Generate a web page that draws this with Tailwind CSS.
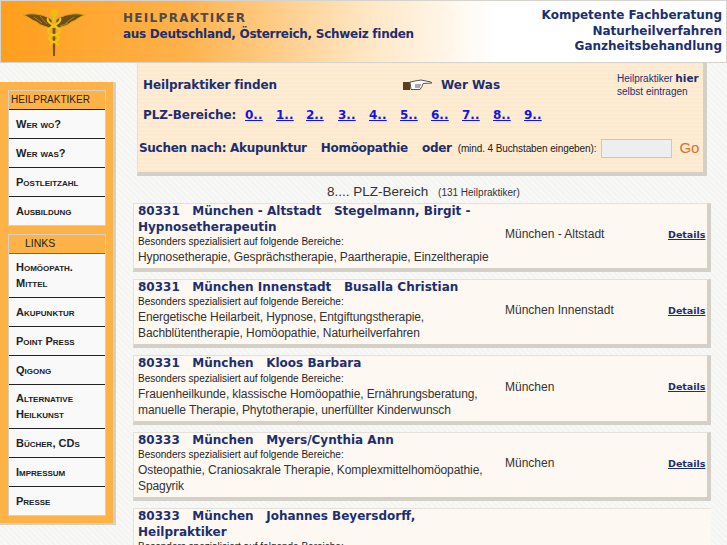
<!DOCTYPE html>
<html lang="de"><head><meta charset="utf-8"><script src="https://cdn.jsdelivr.net/npm/@tailwindcss/browser@4"></script></head>
<body class="w-[727px] h-[545px] overflow-hidden bg-[#f7f7f6] bg-[repeating-linear-gradient(45deg,#f8f8f7_0px,#f8f8f7_2px,#f4f4f3_2px,#f4f4f3_4px)] font-['Liberation_Sans',sans-serif] text-[#222]">
<header class="h-[63px] flex border border-[#d6d3cc] bg-[linear-gradient(90deg,#ff9f1c_0%,#ffb14a_25%,#ffe6c2_50%,#ffffff_68%)]">
  <div class="w-[122px] shrink-0 pl-[21px] pt-[7px]">
    <svg width="64" height="49" viewBox="0 0 64 49" class="block">
      <path d="M30 12C24 7 11 4 1 7c4 1 6 3 8 4 2 2 5 2 7 4 3 3 8 3 11 5 2 1 3-1 3-3z" fill="#6f4d18" stroke="#d8a814"/>
      <path d="M34 12C40 7 53 4 63 7c-4 1-6 3-8 4-2 2-5 2-7 4-3 3-8 3-11 5-2 1-3-1-3-3z" fill="#6f4d18" stroke="#d8a814"/>
      <path d="M12 9l8 6M18 8l7 8M46 15l-8 3M52 9l-8 6" stroke="#a8801e"/>
      <circle cx="32" cy="4.500" r="3.500" fill="#e8c010"/>
      <path d="M32 7 L32 14" stroke="#e8c010" stroke-width="3"/>
      <path d="M30.500 20h3l-.5 28h-2z" fill="#7a5414"/>
      <path d="M26 10c-3 6 12 8 12 13s-11 3-11 7 10 4 9 8M38 10c3 6-12 8-12 13s11 3 11 7-10 4-9 8" fill="none" stroke="#efc80f" stroke-width="2"/>
    </svg>
  </div>
  <div class="pt-[10px]">
    <div class="font-['DejaVu_Sans',sans-serif] font-bold text-[12px] leading-[15px] tracking-[1.3px] text-[#4c4c4c]">HEILPRAKTIKER</div>
    <div class="mt-[1px] font-['DejaVu_Sans',sans-serif] font-bold text-[12px] leading-[15px] tracking-[-0.28px] text-[#1d2f6f] whitespace-nowrap">aus Deutschland, Österreich, Schweiz finden</div>
  </div>
  <div class="ml-auto pr-[4px] pt-[7px] text-right font-['DejaVu_Sans',sans-serif] font-bold text-[12px] leading-[15.500px] text-[#1d2f6f]">
    <div>Kompetente Fachberatung</div><div>Naturheilverfahren</div><div>Ganzheitsbehandlung</div>
  </div>
</header>
<div class="flex items-start">
  <aside class="mt-[19px] w-[116px] shrink-0 bg-[#ffb347] border-r-[3px] border-b-[2px] border-[#d4d0c8] pl-[8px] pr-[7px] pt-[8px] pb-[7px]">
    <nav class="bg-[#f9f9f9] border border-[#d4d0c8] text-[11px] font-bold [font-variant:small-caps] text-[#222]">
      <div class="h-[18px] bg-[#ffb347] pl-[2px] text-[10px] leading-[18px] font-normal [font-variant:normal] border-b border-[#222] box-content">HEILPRAKTIKER</div>
      <a class="block h-[28px] pl-[7px] leading-[28px] border-b border-[#222] box-content">Wer wo?</a>
      <a class="block h-[28px] pl-[7px] leading-[28px] border-b border-[#222] box-content">Wer was?</a>
      <a class="block h-[28px] pl-[7px] leading-[28px] border-b border-[#222] box-content">Postleitzahl</a>
      <a class="block h-[28px] pl-[7px] leading-[28px]">Ausbildung</a>
    </nav>
    <nav class="mt-[8px] bg-[#f9f9f9] border border-[#d4d0c8] text-[11px] font-bold [font-variant:small-caps] text-[#222]">
      <div class="h-[18px] bg-[#ffb347] pl-[16px] text-[10.500px] leading-[17px] font-normal [font-variant:normal] border-b border-[#7a6a50] box-content">LINKS</div>
      <a class="block h-[38px] pl-[7px] pt-[5px] leading-[16px] border-b border-[#222] box-content">Homöopath.<br>Mittel</a>
      <a class="block h-[28px] pl-[7px] leading-[28px] border-b border-[#222] box-content">Akupunktur</a>
      <a class="block h-[28px] pl-[7px] leading-[28px] border-b border-[#222] box-content">Point Press</a>
      <a class="block h-[28px] pl-[7px] leading-[28px] border-b border-[#222] box-content">Qigong</a>
      <a class="block h-[38px] pl-[7px] pt-[5px] leading-[16px] border-b border-[#222] box-content">Alternative<br>Heilkunst</a>
      <a class="block h-[28px] pl-[7px] leading-[28px] border-b border-[#222] box-content">Bücher, CDs</a>
      <a class="block h-[28px] pl-[7px] leading-[28px] border-b border-[#222] box-content">Impressum</a>
      <a class="block h-[28px] pl-[7px] leading-[28px]">Presse</a>
    </nav>
  </aside>
  <main class="ml-[17px] w-[578px] shrink-0">
    <section class="ml-[4px] w-[570px] h-[113px] border-l border-[#e5e1d8] border-r-[4px] border-b-[4px] border-r-[#d4d0c8] border-b-[#d4d0c8] bg-[repeating-linear-gradient(0deg,#fde9cd_0px,#fde9cd_2px,#feecd4_2px,#feecd4_4px)] font-['DejaVu_Sans',sans-serif] font-bold text-[12px] text-[#1d2f6f]">
      <div class="flex items-center h-[42px] pt-[1px] pl-[5px] pr-[5px]">
        <span class="w-[260px] tracking-[-0.1px] shrink-0">Heilpraktiker finden</span>
        <svg width="29" height="12" viewBox="0 0 29 12" class="mr-[9px] shrink-0">
          <path d="M0 3h7v8H0z" fill="#5b3d1c"/>
          <path d="M7 3l5-1 6-1 10 2 1 1-9 .5-1 3-2 3H8z" fill="#fff" stroke="#555" stroke-width="1"/>
          <path d="M12 6h6M12 8h5" stroke="#555"/>
        </svg>
        <span>Wer Was</span>
        <div class="ml-auto w-[81px] font-['Liberation_Sans',sans-serif] font-normal text-[10px] leading-[13px] pt-[1px] shrink-0">
          <div class="whitespace-nowrap">Heilpraktiker <b class="font-['DejaVu_Sans',sans-serif] text-[10.500px]">hier</b></div><div>selbst eintragen</div>
        </div>
      </div>
      <div class="flex items-center h-[20px] pl-[5px]">
        <span class="w-[102px] shrink-0 tracking-[-0.05px]">PLZ-Bereiche:</span>
        <div class="flex text-[#1515e0] underline">
          <a class="w-[31px]">0..</a><a class="w-[30px]">1..</a><a class="w-[32px]">2..</a><a class="w-[31px]">3..</a><a class="w-[31px]">4..</a><a class="w-[31px]">5..</a><a class="w-[31px]">6..</a><a class="w-[31px]">7..</a><a class="w-[31px]">8..</a><a>9..</a>
        </div>
      </div>
      <div class="flex items-center h-[24px] mt-[11px] pl-[1px] tracking-[-0.3px]">
        <span class="whitespace-pre">Suchen nach: Akupunktur</span>
        <span class="ml-[14px]">Homöopathie</span>
        <span class="ml-[14px]">oder</span>
        <span class="ml-[6px] font-['Liberation_Sans',sans-serif] font-normal text-[10px] tracking-[-0.1px] text-[#222] whitespace-nowrap">(mind. 4 Buchstaben eingeben):</span>
        <span class="ml-[5px] w-[71px] h-[19px] shrink-0 bg-[#eeeeee] border border-[#c8c8c8]"></span>
        <span class="ml-[7px] font-['Liberation_Sans',sans-serif] font-normal text-[15px] tracking-normal text-[#d9712f]">Go</span>
      </div>
    </section>
    <h2 class="mt-[6px] h-[21px] pl-[194px] text-[13.500px] leading-[20px] font-normal text-[#333]">8.... PLZ-Bereich <span class="ml-[6px] text-[10px]">(131 Heilpraktiker)</span></h2>
    <div class="flex flex-col gap-[7px] text-[#333]">
      <article class="h-[68.500px] flex border-t border-l border-[#e5e1d8] border-r-[4px] border-b-[4px] border-r-[#d4d0c8] border-b-[#d4d0c8] bg-[#fdf8f1] pl-[4px]">
        <div class="w-[360px] mr-[7px] shrink-0">
          <div class="font-['DejaVu_Sans',sans-serif] font-bold text-[12px] leading-[15.500px] text-[#1d2f6f] whitespace-pre-wrap">80331   München - Altstadt   Stegelmann, Birgit - Hypnosetherapeutin</div>
          <div class="text-[10px] leading-[13px] text-[#222]">Besonders spezialisiert auf folgende Bereiche:</div>
          <div class="mt-[1px] text-[12px] leading-[16px] tracking-[-0.1px]">Hypnosetherapie, Gesprächstherapie, Paartherapie, Einzeltherapie</div>
        </div>
        <div class="w-[163px] shrink-0 self-center text-[12px] pb-[3px]">München - Altstadt</div>
        <a class="self-center font-['DejaVu_Sans',sans-serif] font-bold text-[9.500px] underline text-[#1d2f6f] pb-[2px]">Details</a>
      </article>
      <article class="h-[69.500px] flex border-t border-l border-[#e5e1d8] border-r-[4px] border-b-[4px] border-r-[#d4d0c8] border-b-[#d4d0c8] bg-[#fdf8f1] pl-[4px]">
        <div class="w-[360px] mr-[7px] shrink-0">
          <div class="font-['DejaVu_Sans',sans-serif] font-bold text-[12px] leading-[15.500px] text-[#1d2f6f] whitespace-pre-wrap">80331   München Innenstadt   Busalla Christian</div>
          <div class="text-[10px] leading-[13px] text-[#222]">Besonders spezialisiert auf folgende Bereiche:</div>
          <div class="mt-[1px] text-[12px] leading-[16px] tracking-[-0.1px]">Energetische Heilarbeit, Hypnose, Entgiftungstherapie, Bachblütentherapie, Homöopathie, Naturheilverfahren</div>
        </div>
        <div class="w-[163px] shrink-0 self-center text-[12px] pb-[3px]">München Innenstadt</div>
        <a class="self-center font-['DejaVu_Sans',sans-serif] font-bold text-[9.500px] underline text-[#1d2f6f] pb-[2px]">Details</a>
      </article>
      <article class="h-[69.500px] flex border-t border-l border-[#e5e1d8] border-r-[4px] border-b-[4px] border-r-[#d4d0c8] border-b-[#d4d0c8] bg-[#fdf8f1] pl-[4px]">
        <div class="w-[360px] mr-[7px] shrink-0">
          <div class="font-['DejaVu_Sans',sans-serif] font-bold text-[12px] leading-[15.500px] text-[#1d2f6f] whitespace-pre-wrap">80331   München   Kloos Barbara</div>
          <div class="text-[10px] leading-[13px] text-[#222]">Besonders spezialisiert auf folgende Bereiche:</div>
          <div class="mt-[1px] text-[12px] leading-[16px] tracking-[-0.1px]">Frauenheilkunde, klassische Homöopathie, Ernährungsberatung, manuelle Therapie, Phytotherapie, unerfüllter Kinderwunsch</div>
        </div>
        <div class="w-[163px] shrink-0 self-center text-[12px] pb-[3px]">München</div>
        <a class="self-center font-['DejaVu_Sans',sans-serif] font-bold text-[9.500px] underline text-[#1d2f6f] pb-[2px]">Details</a>
      </article>
      <article class="h-[69.500px] flex border-t border-l border-[#e5e1d8] border-r-[4px] border-b-[4px] border-r-[#d4d0c8] border-b-[#d4d0c8] bg-[#fdf8f1] pl-[4px]">
        <div class="w-[360px] mr-[7px] shrink-0">
          <div class="font-['DejaVu_Sans',sans-serif] font-bold text-[12px] leading-[15.500px] text-[#1d2f6f] whitespace-pre-wrap">80333   München   Myers/Cynthia Ann</div>
          <div class="text-[10px] leading-[13px] text-[#222]">Besonders spezialisiert auf folgende Bereiche:</div>
          <div class="mt-[1px] text-[12px] leading-[16px] tracking-[-0.1px]">Osteopathie, Craniosakrale Therapie, Komplexmittelhomöopathie, Spagyrik</div>
        </div>
        <div class="w-[163px] shrink-0 self-center text-[12px] pb-[3px]">München</div>
        <a class="self-center font-['DejaVu_Sans',sans-serif] font-bold text-[9.500px] underline text-[#1d2f6f] pb-[2px]">Details</a>
      </article>
      <article class="h-[70px] flex border-t border-l border-[#e5e1d8] bg-[#fdf8f1] pl-[4px]">
        <div class="w-[360px] mr-[7px] shrink-0">
          <div class="font-['DejaVu_Sans',sans-serif] font-bold text-[12px] leading-[15.500px] text-[#1d2f6f] whitespace-pre-wrap">80333   München   Johannes Beyersdorff, Heilpraktiker</div>
          <div class="text-[10px] leading-[13px] text-[#222]">Besonders spezialisiert auf folgende Bereiche:</div>
        </div>
      </article>
    </div>
  </main>
</div>
</body></html>
